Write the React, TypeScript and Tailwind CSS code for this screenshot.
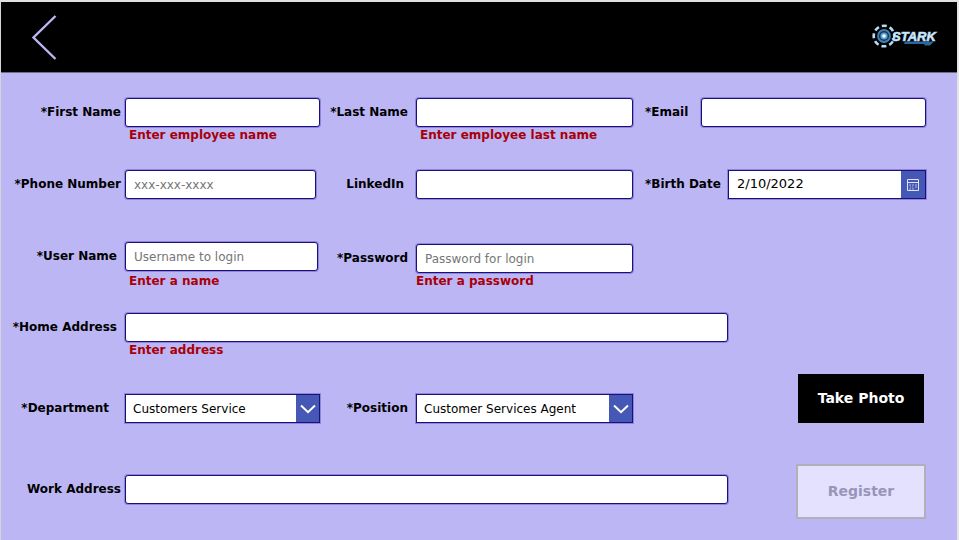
import { useState } from "react";
import type { ReactNode } from "react";

const box =
  "h-[29px] w-full min-w-0 border border-[#1b0f7c] bg-white text-[12px] text-black shadow-[0_0_0_1px_#8f86dc] outline-none placeholder:text-[#767676]";

type FieldProps = {
  id: string;
  label: string;
  labelClass: string;
  className?: string;
  error?: string;
  errorClass?: string;
  children: ReactNode;
};

function Field({ id, label, labelClass, className = "", error, errorClass = "pl-1", children }: FieldProps) {
  return (
    <div className={`flex min-w-0 items-start ${className}`}>
      <label htmlFor={id} className={`shrink-0 whitespace-nowrap text-[12px] leading-[28px] font-bold ${labelClass}`}>
        {label}
      </label>
      <div className="min-w-0 flex-1">
        {children}
        {error && (
          <p className={`text-[12px] leading-[16px] font-bold whitespace-nowrap text-[#a80008] ${errorClass}`}>{error}</p>
        )}
      </div>
    </div>
  );
}

function TextBox({ id, type = "text", placeholder }: { id: string; type?: string; placeholder?: string }) {
  return <input id={id} type={type} placeholder={placeholder} className={`${box} block rounded-[3px] px-2`} />;
}

function SelectBox({ id, options }: { id: string; options: string[] }) {
  return (
    <div className="relative">
      <select id={id} className={`${box} block appearance-none pr-7 pl-[7px]`}>
        {options.map((o) => (
          <option key={o}>{o}</option>
        ))}
      </select>
      <span className="pointer-events-none absolute inset-y-px right-px flex w-[23px] items-center justify-center bg-[#4658b5]">
        <svg width="16" height="10" viewBox="0 0 16 10" fill="none" stroke="white" strokeWidth="2">
          <path d="M1 1.5 8 8.2 15 1.5" />
        </svg>
      </span>
    </div>
  );
}

function StarkLogo() {
  return (
    <svg width="68" height="28" viewBox="0 0 68 28" role="img" aria-label="Stark">
      <circle cx="13" cy="13" r="10.3" fill="none" stroke="#b4dcf4" strokeWidth="2.6" strokeDasharray="5 3.09" strokeDashoffset="2.5" />
      <circle cx="13" cy="13" r="6" fill="#12385c" stroke="#4580ae" strokeWidth="1.8" />
      <circle cx="13" cy="13" r="3.6" fill="#5b9fd0" />
      <circle cx="13" cy="13" r="1.8" fill="#effaff" />
      <path d="M34 18.5H63L59 22.5H54L53 21H33Z" fill="#2a679c" />
      <text
        x="21"
        y="17.5"
        fontFamily="Liberation Sans, sans-serif"
        fontSize="13"
        fontWeight="700"
        fontStyle="italic"
        fill="#e2f3fc"
        stroke="#a8d6f2"
        strokeWidth="0.7"
      >
        STARK
      </text>
    </svg>
  );
}

export default function App() {
  const [birthDate, setBirthDate] = useState("2/10/2022");
  const row = "grid grid-cols-[319fr_313fr_293fr] pr-[31px]";

  return (
    <div className="flex min-h-screen flex-col border-t-2 border-r-2 border-l border-t-[#dfe0e2] border-r-[#e4e4e6] border-l-[#d4d4da] bg-[#bcb6f5] font-['DejaVu_Sans',Verdana,sans-serif] text-black">
      <header className="flex h-[71px] items-center justify-between border-b border-[#6e6a90] bg-black pr-[18px] pl-[30px]">
        <button type="button" aria-label="Back">
          <svg width="26" height="46" viewBox="0 0 26 46" fill="none" stroke="#bcb6f5" strokeWidth="2.4">
            <path d="M24.5 2 2.5 23.5 24.5 45" />
          </svg>
        </button>
        <StarkLogo />
      </header>

      <form className="flex flex-col pt-[25px]" onSubmit={(e) => e.preventDefault()}>
        <div className={`${row} h-[72px]`}>
          <Field id="first" label="*First Name" labelClass="w-[124px] pr-1 text-right" error="Enter employee name">
            <TextBox id="first" />
          </Field>
          <Field id="last" label="*Last Name" labelClass="w-[96px] pr-2 text-right" error="Enter employee last name">
            <TextBox id="last" />
          </Field>
          <Field id="email" label="*Email" labelClass="w-[68px] pl-3">
            <TextBox id="email" type="email" />
          </Field>
        </div>

        <div className={`${row} h-[72px]`}>
          <Field id="phone" label="*Phone Number" labelClass="w-[124px] pr-1 text-right" className="pr-1">
            <TextBox id="phone" type="tel" placeholder="xxx-xxx-xxxx" />
          </Field>
          <Field id="linkedin" label="LinkedIn" labelClass="w-[96px] pr-3 text-right">
            <TextBox id="linkedin" />
          </Field>
          <Field id="birth" label="*Birth Date" labelClass="w-[95px] pl-3">
            <div className={`${box} flex`}>
              <input
                id="birth"
                value={birthDate}
                onChange={(e) => setBirthDate(e.target.value)}
                className="min-w-0 flex-1 px-2 pb-0.5 text-[13px] outline-none"
              />
              <button type="button" aria-label="Open calendar" className="flex w-6 items-center justify-center bg-[#4658b5]">
                <svg width="12" height="12" viewBox="0 0 12 12" fill="none" stroke="#dfe4fb">
                  <path d="M.5 .5H11.5V11.5H.5ZM.5 3.5H11.5" />
                  <path d="M2 6H4M5 6H7M8 6H10M3 8H4M5 8H6M8 8H10M2 10H4M5 10H7" stroke="#a9b4e6" />
                </svg>
              </button>
            </div>
          </Field>
        </div>

        <div className={`${row} h-[71px]`}>
          <Field
            id="user"
            label="*User Name"
            labelClass="w-[124px] pr-2 text-right"
            className="pr-0.5"
            error="Enter a name"
            errorClass="pt-0.5 pl-1"
          >
            <TextBox id="user" placeholder="Username to login" />
          </Field>
          <Field
            id="password"
            label="*Password"
            labelClass="w-[96px] pr-2 text-right"
            className="pt-0.5"
            error="Enter a password"
            errorClass=""
          >
            <TextBox id="password" type="password" placeholder="Password for login" />
          </Field>
        </div>

        <div className="h-[61px] pr-[229px]">
          <Field id="home" label="*Home Address" labelClass="w-[124px] pr-2 text-right" error="Enter address">
            <TextBox id="home" />
          </Field>
        </div>

        <div className={`${row} mb-[41px] items-end`}>
          <Field id="department" label="*Department" labelClass="w-[124px] pr-4 text-right">
            <SelectBox id="department" options={["Customers Service"]} />
          </Field>
          <Field id="position" label="*Position" labelClass="w-[96px] pr-2 text-right">
            <SelectBox id="position" options={["Customer Services Agent"]} />
          </Field>
          <button type="button" className="mr-0.5 h-[49px] w-[126px] justify-self-end bg-black text-[14px] font-bold text-white">
            Take Photo
          </button>
        </div>

        <div className="flex items-center pr-[31px]">
          <Field id="work" label="Work Address" labelClass="w-[124px] pr-1 text-right" className="flex-1 pb-1">
            <TextBox id="work" />
          </Field>
          <button
            type="submit"
            disabled
            className="ml-[68px] h-[55px] w-[130px] border-2 border-[#b1b0ba] bg-[#e4e1fe] text-[14px] font-bold text-[#9995b8]"
          >
            Register
          </button>
        </div>
      </form>
    </div>
  );
}
